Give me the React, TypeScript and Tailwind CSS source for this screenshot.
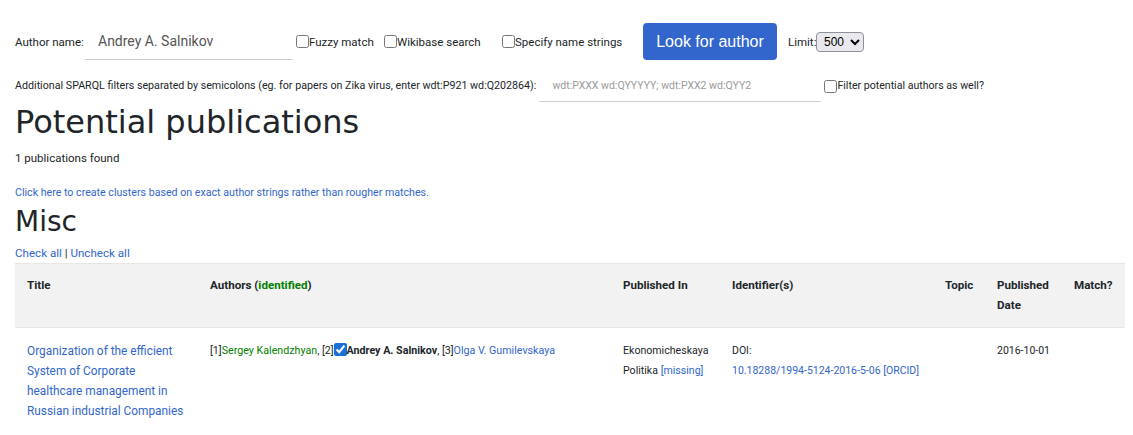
import { FC } from "react"

const linkCls = "text-[#3366cc] hover:underline"

type Column = {
	label: React.ReactNode
	width: string
}

const columns: Column[] = [
	{ label: "Title", width: "w-[183px]" },
	{ label: <>Authors (<span className="text-[#008000]">identified</span>)</>, width: "w-[413px]" },
	{ label: "Published In", width: "w-[109px]" },
	{ label: "Identifier(s)", width: "w-[213px]" },
	{ label: "Topic", width: "w-[52px]" },
	{ label: "Published Date", width: "w-[77px]" },
	{ label: "Match?", width: "w-[63px]" },
]

const CheckOption: FC<{ label: string; width: string }> = ({ label, width }) => (
	<label className={`flex items-center ${width}`}>
		<input type="checkbox" className="m-0 h-[13px] w-[13px]" />
		<span>{label}</span>
	</label>
)

export default function App() {
	return (
		<div className="min-h-screen bg-white px-[15px] text-[12px] leading-[20px] text-[#212529] font-['Roboto','Liberation_Sans',sans-serif]">
			{/* search form */}
			<div className="mt-[23px] flex h-[37px] items-center text-[11.5px]">
				<span className="w-[70px] whitespace-nowrap">Author name:</span>
				<input
					type="text"
					defaultValue="Andrey A. Salnikov"
					className="h-[37px] w-[208px] border-b border-[#cccccc] pl-[13px] text-[14px] text-[#555555] outline-none"
				/>
				<div className="ml-[3px] flex items-center">
					<CheckOption label="Fuzzy match" width="w-[88px]" />
					<CheckOption label="Wikibase search" width="w-[118px]" />
					<CheckOption label="Specify name strings" width="w-[141px]" />
				</div>
				<button
					type="button"
					className="h-[37px] w-[134px] rounded-[4px] bg-[#3366cc] text-[16px] text-white font-['Liberation_Sans',Arial,sans-serif]"
				>
					Look for author
				</button>
				<span className="ml-[11px] w-[28px]">Limit:</span>
				<select
					defaultValue="500"
					className="h-[20px] w-[48px] rounded-[4px] border border-[#8f8f9d] bg-[#e9e9ed] pl-[3px] text-[12px] text-black font-['Liberation_Sans',Arial,sans-serif]"
				>
					<option value="50">50</option>
					<option value="500">500</option>
					<option value="5000">5000</option>
				</select>
			</div>

			<div className="mt-[11px] flex h-[30px] items-center text-[10.7px]">
				<span className="whitespace-nowrap">Additional SPARQL filters separated by semicolons (eg. for papers on Zika virus, enter wdt:P921 wd:Q202864):</span>
				<input
					type="text"
					placeholder="wdt:PXXX wd:QYYYYY; wdt:PXX2 wd:QYY2"
					className="ml-[3px] h-[31px] w-[282px] border-b border-[#cccccc] pl-[13px] text-[10.5px] outline-none placeholder:text-[#9a9a9a]"
				/>
				<label className="ml-[3px] flex items-center">
					<input type="checkbox" className="m-0 h-[13px] w-[13px]" />
					<span className="text-[10.6px]">Filter potential authors as well?</span>
				</label>
			</div>

			{/* results */}
			<h1 className="mt-[2px] text-[32px] leading-[38px] text-[#212529] font-['DejaVu_Sans',Verdana,sans-serif]">
				Potential publications
			</h1>
			<p className="mt-[7px] text-[11.5px]">1 publications found</p>
			<p className="mt-[15px] text-[10.65px]">
				<a href="#" className={linkCls}>Click here to create clusters based on exact author strings rather than rougher matches.</a>
			</p>
			<h2 className="mt-[2px] text-[28px] leading-[34px] text-[#212529] font-['DejaVu_Sans',Verdana,sans-serif]">Misc</h2>
			<p className="mt-[4px] text-[11.6px]">
				<a href="#" className={linkCls}>Check all</a> | <a href="#" className={linkCls}>Uncheck all</a>
			</p>

			<table className="w-[1110px] table-fixed border-collapse">
				<thead>
					<tr className="border-y border-[#e6e6e6] bg-[#f2f2f2]">
						{columns.map((col, i) => (
							<th key={i} className={`${col.width} px-[12px] pt-[11px] pb-[12px] text-left align-top text-[11.6px] font-bold`}>
								{col.label}
							</th>
						))}
					</tr>
				</thead>
				<tbody>
					<tr>
						<td className="px-[12px] pt-[13px] pb-[12px] align-top text-[11.85px]">
							<a href="#" className={linkCls}>Organization of the efficient System of Corporate healthcare management in Russian industrial Companies</a>
						</td>
						<td className="px-[12px] pt-[13px] pb-[12px] align-top text-[10.7px]">
							[1]<a href="#" className="text-[#008000]">Sergey Kalendzhyan</a>, [2]
							<input type="checkbox" defaultChecked className="m-0 h-[13px] w-[13px] align-[-2px] accent-[#1a6ed8]" />
							<b>Andrey A. Salnikov</b>, [3]<a href="#" className={linkCls}>Olga V. Gumilevskaya</a>
						</td>
						<td className="px-[12px] pt-[13px] pb-[12px] align-top text-[10.6px]">
							Ekonomicheskaya<br />
							<span className="whitespace-nowrap">Politika <a href="#" className={linkCls}>[missing]</a></span>
						</td>
						<td className="px-[12px] pt-[13px] pb-[12px] align-top text-[10.5px]">
							DOI:<br />
							<a href="#" className={linkCls}>10.18288/1994-5124-2016-5-06</a> <a href="#" className={linkCls}>[ORCID]</a>
						</td>
						<td className="px-[12px] pt-[13px] pb-[12px] align-top" />
						<td className="px-[12px] pt-[13px] pb-[12px] align-top text-[10.5px]">2016-10-01</td>
						<td className="px-[12px] pt-[13px] pb-[12px] align-top" />
					</tr>
				</tbody>
			</table>
		</div>
	)
}
